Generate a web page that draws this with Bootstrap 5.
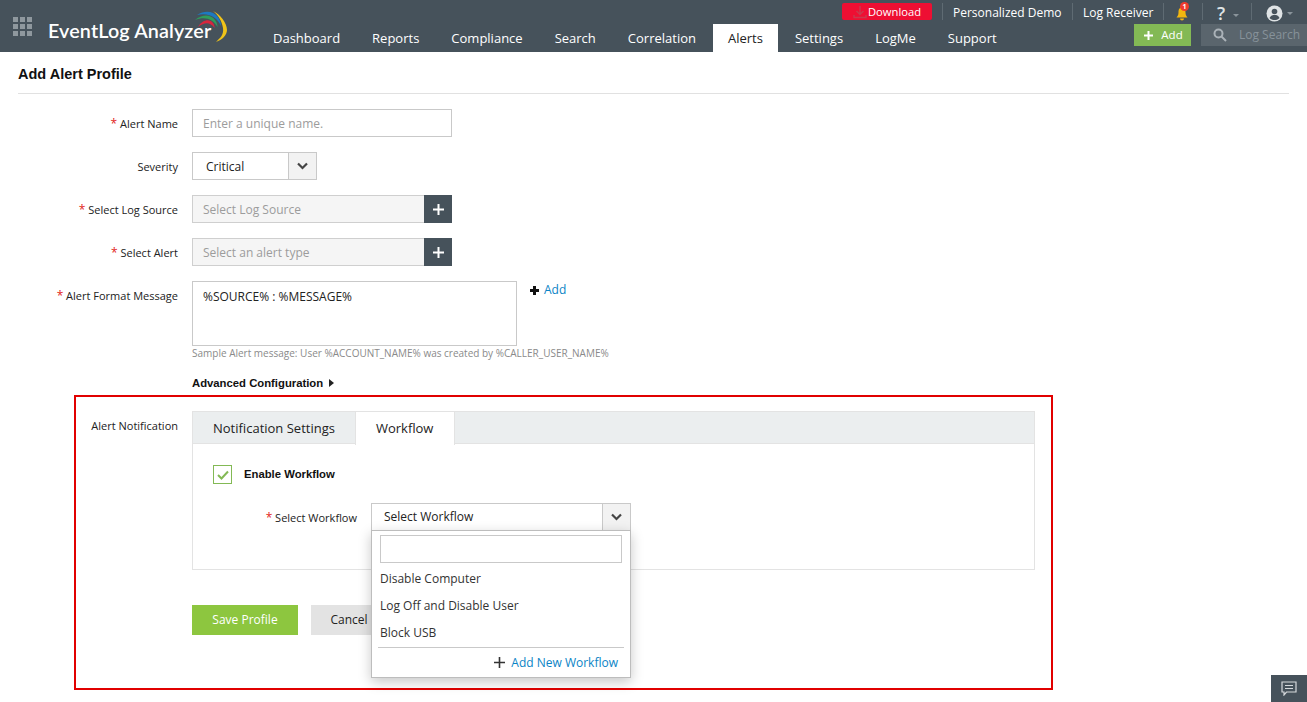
<!DOCTYPE html>
<html lang="en"><head><meta charset="utf-8"><title>Add Alert Profile</title>
<link href="https://cdn.jsdelivr.net/npm/bootstrap@5.3.0/dist/css/bootstrap.min.css" rel="stylesheet">
<style>
html,body{height:702px;overflow:hidden}
body{font-family:"Open Sans","Liberation Sans",sans-serif;font-size:12px;color:#222;background:#fff;position:relative}
.app-head{height:52px;background:#46525b;color:#fff;position:relative}
.grid-ico{width:19px;height:19px;margin:17px 0 0 13px;display:grid;grid-template-columns:repeat(3,5px);grid-template-rows:repeat(3,5px);gap:2px}
.grid-ico i{background:#8f989e;display:block}
.logo-wrap{margin:0 0 0 16px;width:200px;height:52px;position:relative}
.logo-txt{position:absolute;left:0;top:18px;font:600 19.7px/26px "Lato","Open Sans",sans-serif;color:#fff;white-space:nowrap;letter-spacing:.15px}
.logo-svg{position:absolute;left:134px;top:9px}
.main-nav{position:absolute;left:257px;top:24px;height:28px;flex-wrap:nowrap}
.main-nav .nav-link{color:#fff;font-size:13px;line-height:28px;padding:0 16px;height:28px;border-radius:0}
.main-nav .nav-link.active{background:#fff;color:#222;padding:0 15px;margin:0 1px}
.top-tools{position:absolute;left:842px;top:3px;height:17px;display:flex;align-items:center;font-size:12px}
.dl-btn{width:90px;height:17px;background:#ee0f33;border-radius:2px;color:#fff;font-size:11.2px;line-height:18px;display:flex;justify-content:center;align-items:center;gap:1px;margin-right:10px;flex:none}
.tool-item{height:17px;line-height:19px;padding:0 0 0 10px;border-left:1px solid #5f6b73;white-space:nowrap;position:relative;flex:none}
.wd-1{width:130px}.wd-2{width:91px}.wd-3{width:39px;padding-left:11px}.wd-4{width:49px;font-size:18px;padding-left:14px;color:#dfe3e5;font-weight:600;line-height:20px}.wd-5{width:56px;padding-left:14px}
.sub-tools{position:absolute;top:24px;right:0;display:flex;gap:10px}
.add-top{width:57px;height:22px;background:#83b955;color:#fff;font-size:11.5px;line-height:24px;display:flex;justify-content:center;align-items:center;gap:8px;padding-left:2px}
.log-srch{width:106px;height:22px;background:#5a656d;color:#87929a;font-size:12px;line-height:24px;display:flex;align-items:center;gap:12px;padding-left:12px;white-space:nowrap}
.bell-n{position:absolute;left:16px;top:-1px;width:9px;height:9px;border-radius:50%;background:#ef3b2d;color:#fff;font-size:7px;line-height:9px;text-align:center;font-weight:700}
.caret-mini{display:inline-block;border:3px solid transparent;border-top:3px solid #8a949b;border-bottom:0;vertical-align:middle}
.page-body{padding:0 18px}
.page-title{font:700 14.5px/20px "Liberation Sans",Arial,sans-serif;color:#111;margin:0;padding:12px 0 9px;border-bottom:1px solid #e1e1e1}
.form-top{margin-top:15px}
.field-row{display:flex;align-items:flex-start;gap:14px;margin-bottom:15px}
.lbl{width:160px;height:28px;text-align:right;line-height:28px;font-size:11px;color:#222;flex:none;padding-top:1px}
.lbl b{color:#e2231a;font-weight:400;font-size:12px}
.inp{height:28px;border:1px solid #c9c9c9;border-radius:0;font-size:12px;padding:0 10px;color:#222;line-height:26px;background:#fff;box-shadow:none}
.inp::placeholder{color:#9c9c9c;opacity:1}
.w260{width:260px;flex:none}
.sel-wrap{display:flex;height:28px;border:1px solid #c9c9c9;background:#fff}
.sev-wrap{width:125px}
.sev-wrap .sel-val{padding:1px 13px 0}
.sel-val{flex:1;line-height:26px;padding:1px 12px 0;font-size:12px;white-space:nowrap}
.sel-arrow{width:28px;background:#f2f2f2;border-left:1px solid #c9c9c9;display:flex;align-items:center;justify-content:center}
.pick-inp{display:flex;width:260px;height:28px}
.pick-box{flex:1;background:#f5f5f5;border:1px solid #cfcfcf;border-right:0;color:#9c9c9c;line-height:26px;padding:1px 10px 0;font-size:12px}
.pick-plus{width:28px;background:#46525b;display:flex;align-items:center;justify-content:center}
.msg-box{width:325px;height:65px;border:1px solid #c9c9c9;padding:6px 10px;font-size:12px;line-height:18px;color:#222}
.add-link{color:#0a84c6;font-size:12px;line-height:16px;display:flex;align-items:center;gap:5px;margin:1px 0 0 -1px;text-decoration:none}
.hint-txt{margin:-15px 0 0 174px;font-size:10px;line-height:14px;color:#8a8a8a;height:14px}
.adv-link{margin:16px 0 0 174px;font:700 11.3px/14px "Liberation Sans",Arial,sans-serif;color:#111;display:flex;align-items:center;gap:6px;height:14px}
.adv-arrow{border:4px solid transparent;border-left:5px solid #222;border-right:0}
.red-box{width:979px;height:295px;margin:5px 0 0 56px;border:2px solid #e10000;display:flex;gap:14px;padding-top:14px;position:relative}
.red-lbl{width:102px;text-align:right;font-size:11px;line-height:16px;padding-top:7px;flex:none}
.tabs-col{width:843px;flex:none}
.wf-tabs{height:33px;background:#ebeeef;border:1px solid #e3e3e3;flex-wrap:nowrap}
.wf-tabs .nav-link{font-size:13px;line-height:32px;height:32px;padding:0 20px;color:#222;border:0;border-radius:0;background:transparent}
.wf-tabs .nav-link.active{background:#fff;color:#222;height:33px;padding:0 20px;width:100px;border-left:1px solid #e3e3e3;border-right:1px solid #e3e3e3}
.wf-pane{height:126px;border:1px solid #e3e3e3;border-top:0;padding:21px 20px 0}
.chk-row{display:flex;align-items:center;gap:12px;height:19px}
.chk-sq{width:19px;height:19px;border:1px solid #83b955;display:flex;align-items:center;justify-content:center;flex:none}
.chk-lbl{font:700 11.3px/19px "Liberation Sans",Arial,sans-serif;color:#111}
.wf-row{display:flex;gap:14px;margin-top:19px}
.wf-lbl{width:144px;text-align:right;font-size:11px;line-height:28px;padding-top:1px;height:28px}
.wf-lbl b{color:#e2231a;font-weight:400;font-size:12px}
.wf-sel{width:260px;flex:none;position:relative}
.wf-sel>.sel-wrap .sel-val{padding-top:0}
.wf-menu{position:absolute;left:0;top:27px;width:260px;margin:0;padding:4px 0 0;background:#fff;border:1px solid #bdbdbd;border-radius:0;box-shadow:0 4px 12px rgba(0,0,0,.22);display:block;height:148px;z-index:5}
.wf-menu .inp{display:block;width:242px;height:28px;margin:0 8px 2px}
.wf-menu .dropdown-item{font-size:12px;line-height:27px;height:27px;padding:0 8px;color:#333;background:none}
.wf-menu .dropdown-divider{margin:1px 6px 0;border-top:1px solid #c9c9c9;opacity:1}
.wf-add{display:flex;justify-content:flex-end;align-items:center;gap:6px;padding:0 12px 0 0;height:29px;color:#0a84c6;font-size:12px;line-height:29px}
.act-row{display:flex;gap:13px;margin-top:35px}
.btn-save{width:106px;height:30px;background:#8dc63f;color:#fff;border:0;border-radius:0;font-size:12px;padding:0;line-height:30px}
.btn-cancel{width:76px;height:30px;background:#e3e3e3;color:#222;border:0;border-radius:0;font-size:12px;padding:0;line-height:30px}
.chat-fab{position:absolute;right:0;bottom:0;width:36px;height:27px;background:#46525b;display:flex;align-items:center;justify-content:center}
</style></head>
<body>
<header class="app-head d-flex">
  <div class="grid-ico"><i></i><i></i><i></i><i></i><i></i><i></i><i></i><i></i><i></i></div>
  <div class="logo-wrap">
    <span class="logo-txt">EventLog Analyzer</span>
    <svg class="logo-svg" width="50" height="36" viewBox="0 0 50 36" fill="none">
      <path d="M31 2C38 5 45 14 45 21C45 26 40 31 34 33C38 29 42 26 41 19C40 12 36 6 31 2Z" fill="#f0c419"/>
      <path d="M15 6C23 1 31 2 36 8C38 11 39 14 39 17C36 9 27 3 15 6Z" fill="#1d79c0"/>
      <path d="M13 11C20 5 29 5 33 11C35 14 35.500 16 35.500 18C31 10 23 7 13 11Z" fill="#2f9d5b"/>
      <path d="M16 18C21 10 28 10 31 14C32 15 32.500 17 32.500 19C28 13 23 13 16 18Z" fill="#d7263d"/>
    </svg>
  </div>
  <ul class="nav main-nav">
    <li class="nav-item"><a class="nav-link" href="#">Dashboard</a></li>
    <li class="nav-item"><a class="nav-link" href="#">Reports</a></li>
    <li class="nav-item"><a class="nav-link" href="#">Compliance</a></li>
    <li class="nav-item"><a class="nav-link" href="#">Search</a></li>
    <li class="nav-item"><a class="nav-link" href="#">Correlation</a></li>
    <li class="nav-item"><a class="nav-link active" href="#">Alerts</a></li>
    <li class="nav-item"><a class="nav-link" href="#">Settings</a></li>
    <li class="nav-item"><a class="nav-link" href="#">LogMe</a></li>
    <li class="nav-item"><a class="nav-link" href="#">Support</a></li>
  </ul>
  <div class="top-tools">
    <div class="dl-btn"><svg width="14" height="14" viewBox="0 0 14 14" fill="none" stroke="#c9394e" stroke-width="1.500"><path d="M7 1V9M3.500 6L7 9.500L10.500 6M1 10V12.500H13V10"/></svg><span>Download</span></div>
    <div class="tool-item wd-1">Personalized Demo</div>
    <div class="tool-item wd-2">Log Receiver</div>
    <div class="tool-item wd-3"><svg width="14" height="15" viewBox="0 0 14 15"><path d="M7 1.500C4 1.500 3.500 4 3.500 6.500C3.500 9 2.500 10 1.500 11.500H12.500C11.500 10 10.500 9 10.500 6.500C10.500 4 10 1.500 7 1.500Z" fill="#f4b70f"/><path d="M5 12.500H9A2 2 0 0 1 5 12.500Z" fill="#f4b70f"/></svg><span class="bell-n">1</span></div>
    <div class="tool-item wd-4">?<span class="caret-mini ms-2"></span></div>
    <div class="tool-item wd-5"><svg width="17" height="17" viewBox="0 0 17 17"><circle cx="8.500" cy="8.500" r="8" fill="#dfe3e5"/><circle cx="8.500" cy="6.500" r="2.800" fill="#46525b"/><path d="M3.500 13C4.500 10.500 6.500 10 8.500 10S12.500 10.500 13.500 13C12 14.800 10 15 8.500 15S5 14.800 3.500 13Z" fill="#46525b"/></svg><span class="caret-mini ms-1"></span></div>
  </div>
  <div class="sub-tools">
    <div class="add-top"><svg width="9" height="9" viewBox="0 0 9 9"><path d="M3.500 0H5.500V3.500H9V5.500H5.500V9H3.500V5.500H0V3.500H3.500Z" fill="#fff"/></svg><span>Add</span></div>
    <div class="log-srch"><svg width="14" height="14" viewBox="0 0 14 14" fill="none" stroke="#aab2b8" stroke-width="2"><circle cx="5.500" cy="5.500" r="4"/><path d="M8.500 8.500L13 13"/></svg><span>Log Search</span></div>
  </div>
</header>

<main class="page-body">
  <h1 class="page-title">Add Alert Profile</h1>
  <form class="form-top" onsubmit="return false">
    <div class="field-row"><label class="lbl"><b>*</b> Alert Name</label><input class="form-control inp w260" placeholder="Enter a unique name."></div>
    <div class="field-row"><label class="lbl">Severity</label><div class="sel-wrap sev-wrap"><span class="sel-val">Critical</span><span class="sel-arrow"><svg width="11" height="8" viewBox="0 0 11 8" fill="none" stroke="#444" stroke-width="2.200"><path d="M1 1.500L5.500 6L10 1.500"/></svg></span></div></div>
    <div class="field-row"><label class="lbl"><b>*</b> Select Log Source</label><div class="pick-inp"><span class="pick-box">Select Log Source</span><span class="pick-plus"><svg width="11" height="11" viewBox="0 0 11 11"><path d="M4.500 0H6.500V4.500H11V6.500H6.500V11H4.500V6.500H0V4.500H4.500Z" fill="#fff"/></svg></span></div></div>
    <div class="field-row"><label class="lbl"><b>*</b> Select Alert</label><div class="pick-inp"><span class="pick-box">Select an alert type</span><span class="pick-plus"><svg width="11" height="11" viewBox="0 0 11 11"><path d="M4.500 0H6.500V4.500H11V6.500H6.500V11H4.500V6.500H0V4.500H4.500Z" fill="#fff"/></svg></span></div></div>
    <div class="field-row"><label class="lbl"><b>*</b> Alert Format Message</label><div class="msg-box">%SOURCE% : %MESSAGE%</div><a class="add-link" href="#"><svg width="9" height="9" viewBox="0 0 9 9"><path d="M3 0H6V3H9V6H6V9H3V6H0V3H3Z" fill="#111"/></svg>Add</a></div>
    <div class="hint-txt">Sample Alert message: User %ACCOUNT_NAME% was created by %CALLER_USER_NAME%</div>
    <div class="adv-link">Advanced Configuration <span class="adv-arrow"></span></div>
    <section class="red-box">
      <div class="red-lbl">Alert Notification</div>
      <div class="tabs-col">
        <ul class="nav wf-tabs">
          <li class="nav-item"><a class="nav-link" href="#">Notification Settings</a></li>
          <li class="nav-item"><a class="nav-link active" href="#">Workflow</a></li>
        </ul>
        <div class="wf-pane">
          <div class="chk-row"><span class="chk-sq"><svg width="12" height="10" viewBox="0 0 12 10" fill="none" stroke="#83b955" stroke-width="2"><path d="M1 5L4.500 8.500L11 1.500"/></svg></span><span class="chk-lbl">Enable Workflow</span></div>
          <div class="wf-row">
            <label class="wf-lbl"><b>*</b> Select Workflow</label>
            <div class="wf-sel">
              <div class="sel-wrap"><span class="sel-val">Select Workflow</span><span class="sel-arrow"><svg width="11" height="8" viewBox="0 0 11 8" fill="none" stroke="#444" stroke-width="2.200"><path d="M1 1.500L5.500 6L10 1.500"/></svg></span></div>
              <div class="dropdown-menu wf-menu">
                <input class="form-control inp" aria-label="Filter">
                <a class="dropdown-item" href="#">Disable Computer</a>
                <a class="dropdown-item" href="#">Log Off and Disable User</a>
                <a class="dropdown-item" href="#">Block USB</a>
                <hr class="dropdown-divider">
                <div class="wf-add"><svg width="11" height="11" viewBox="0 0 11 11"><path d="M4.700 0H6.300V4.700H11V6.300H6.300V11H4.700V6.300H0V4.700H4.700Z" fill="#333"/></svg><span>Add New Workflow</span></div>
              </div>
            </div>
          </div>
        </div>
        <div class="act-row"><button class="btn btn-save">Save Profile</button><button class="btn btn-cancel">Cancel</button></div>
      </div>
    </section>
  </form>
</main>
<div class="chat-fab"><svg width="16" height="15" viewBox="0 0 16 15" fill="none" stroke="#d5d9dc" stroke-width="1.200"><path d="M1 1H15V11H5.500L3 14V11H1Z"/><path d="M4 4.500H12M4 7.500H12"/></svg></div>
</body></html>
